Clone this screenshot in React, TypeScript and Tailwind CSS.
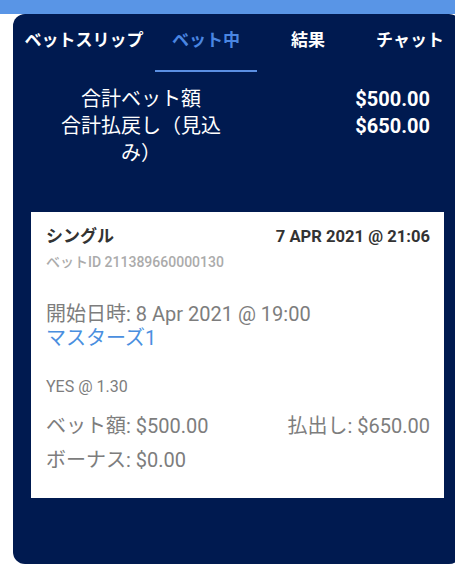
import React from 'react';

const tabs = [
  { label: 'ベットスリップ', width: 'w-[142px]', active: false },
  { label: 'ベット中', width: 'w-[102px]', active: true },
  { label: '結果', width: 'w-[102px]', active: false },
  { label: 'チャット', width: 'w-[102px]', active: false },
];

function Tabs() {
  return (
    <div className="flex h-[58px]">
      {tabs.map((tab) => (
        <div
          key={tab.label}
          className={`${tab.width} shrink-0 flex justify-center pt-[15px] ${
            tab.active ? 'border-b-2 border-[#5b8fe3]' : ''
          }`}
        >
          <span
            className={`text-[17px] leading-[22px] font-bold whitespace-nowrap ${
              tab.active ? 'text-[#4a86e2]' : 'text-white'
            }`}
          >
            {tab.label}
          </span>
        </div>
      ))}
    </div>
  );
}

function Summary() {
  return (
    <div className="flex mt-[14px] pl-[43px] pr-[31px] text-white text-[20px] leading-[27px]">
      <div className="w-[170px] text-center">
        <div>合計ベット額</div>
        <div>合計払戻し（見込み）</div>
      </div>
      <div className="flex-1 text-right font-bold">
        <div>$500.00</div>
        <div>$650.00</div>
      </div>
    </div>
  );
}

function BetCard() {
  return (
    <div className="ml-[18px] mt-[45px] w-[413px] bg-white pl-[15px] pr-[14px] pt-[13px] pb-[26px]">
      <div className="flex justify-between items-baseline text-[17px] leading-[22px] font-bold text-[#333333]">
        <span>シングル</span>
        <span className="text-[16.6px]">7 APR 2021 @ 21:06</span>
      </div>
      <div className="mt-[4px] text-[14px] leading-[20px] font-medium text-[#ababab]">
        ベットID 211389660000130
      </div>

      <div className="mt-[30px] text-[20px] leading-[24px] text-[#7d7d7d]">
        開始日時: 8 Apr 2021 @ 19:00
      </div>
      <div className="text-[20px] leading-[24px] text-[#4a8fdf]">マスターズ1</div>

      <div className="mt-[27px] text-[16px] leading-[20px] text-[#7d7d7d]">YES @ 1.30</div>

      <div className="mt-[17px] flex justify-between text-[20px] leading-[24px] text-[#7d7d7d]">
        <span>ベット額: $500.00</span>
        <span>払出し: $650.00</span>
      </div>
      <div className="mt-[10px] text-[20px] leading-[24px] text-[#7d7d7d]">ボーナス: $0.00</div>
    </div>
  );
}

export default function App() {
  return (
    <div
      className="w-[455px] h-[567px] overflow-hidden bg-white"
      style={{ fontFamily: 'Roboto, "Noto Sans CJK JP", sans-serif' }}
    >
      <div className="h-[14px] bg-[#5995e6]" />
      <div className="ml-[13px] w-[448px] h-[550px] rounded-[12px] bg-[#001a50]">
        <Tabs />
        <Summary />
        <BetCard />
      </div>
    </div>
  );
}
